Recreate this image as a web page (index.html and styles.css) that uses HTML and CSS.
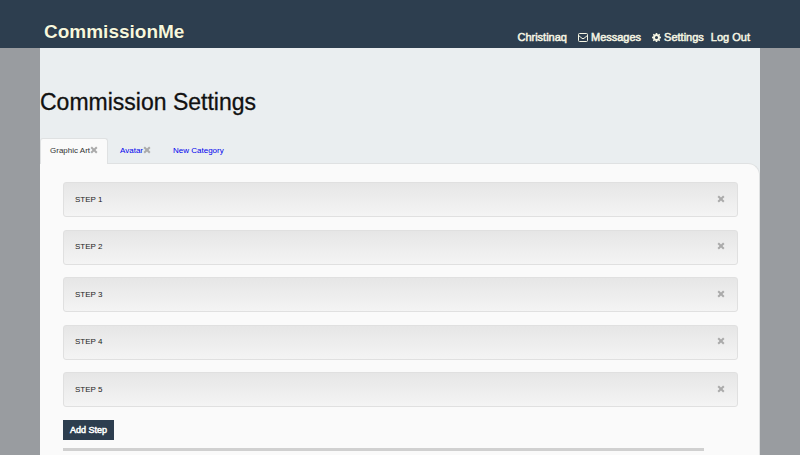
FILE: index.html
```html
<!DOCTYPE html>
<html lang="en">
<head>
<meta charset="utf-8">
<title>CommissionMe</title>
<link rel="stylesheet" href="styles.css">
</head>
<body>
<svg class="sprite" aria-hidden="true">
  <symbol id="close" viewBox="0 0 8 8"><path d="M1.200 1.200 6.800 6.800M6.800 1.200 1.200 6.800" fill="none" stroke="currentColor" stroke-width="2"/></symbol>
</svg>
<header class="topbar">
  <div class="topbar-inner">
    <a class="brand" href="#">CommissionMe</a>
    <nav class="nav">
      <a class="user" href="#">Christinaq</a>
      <a class="messages" href="#"><svg class="mail" viewBox="0 0 10 9" aria-hidden="true"><path d="M1.500.5h7q1 0 1 1v6q0 1-1 1h-7q-1 0-1-1v-6q0-1 1-1ZM.8 2.700 4 5.300q1 .8 2 0l3.200-2.600" fill="none" stroke="currentColor"/></svg>Messages</a>
      <a href="#"><svg class="gear" viewBox="0 0 16 16" aria-hidden="true"><path fill="currentColor" fill-rule="evenodd" d="M6.700 0h2.600l.4 2.100 1.500.6L13 1.500 14.500 3l-1.200 1.800.6 1.500 2.100.4v2.600l-2.100.4-.6 1.500 1.200 1.800-1.500 1.500-1.800-1.200-1.500.6-.4 2.100H6.700l-.4-2.100-1.500-.6L3 14.500 1.500 13l1.200-1.800-.6-1.500L0 9.300V6.700l2.100-.4.6-1.500L1.500 3 3 1.500l1.800 1.200 1.500-.6ZM8 5.300a2.700 2.700 0 1 0 0 5.400 2.700 2.700 0 0 0 0-5.400Z"/></svg>Settings</a>
      <a href="#">Log Out</a>
    </nav>
  </div>
</header>
<main class="page">
  <h1>Commission Settings</h1>
  <div class="tabs">
    <div class="tab active"><a href="#">Graphic Art</a><button class="close" aria-label="Remove Graphic Art"><svg><use href="#close"/></svg></button></div>
    <div class="tab"><a href="#">Avatar</a><button class="close" aria-label="Remove Avatar"><svg><use href="#close"/></svg></button></div>
    <div class="tab"><a href="#">New Category</a></div>
  </div>
  <section class="panel">
    <div class="steps">
      <div class="step"><span>STEP 1</span><button class="close" aria-label="Remove step 1"><svg><use href="#close"/></svg></button></div>
      <div class="step"><span>STEP 2</span><button class="close" aria-label="Remove step 2"><svg><use href="#close"/></svg></button></div>
      <div class="step"><span>STEP 3</span><button class="close" aria-label="Remove step 3"><svg><use href="#close"/></svg></button></div>
      <div class="step"><span>STEP 4</span><button class="close" aria-label="Remove step 4"><svg><use href="#close"/></svg></button></div>
      <div class="step"><span>STEP 5</span><button class="close" aria-label="Remove step 5"><svg><use href="#close"/></svg></button></div>
    </div>
    <button class="add">Add Step</button>
    <hr>
  </section>
</main>
</body>
</html>
```
FILE: styles.css
```css
* { box-sizing: border-box; }
body {
  margin: 0;
  min-height: 100vh;
  display: flex;
  flex-direction: column;
  background: #999ca0;
  font: 8px/12px "Liberation Sans", Arial, sans-serif;
  color: #222;
}
a { color: inherit; text-decoration: none; }
button { border: 0; padding: 0; font-family: inherit; cursor: pointer; }
.sprite { position: absolute; width: 0; height: 0; }

.topbar { background: #2d3e4f; color: #f5f5e3; }
.topbar-inner {
  width: 90%;
  height: 48px;
  margin: 0 auto;
  padding: 0 10px 4px 4px;
  display: flex;
  justify-content: space-between;
  align-items: flex-end;
}
.brand {
  color: #f7f7dc;
  font-size: 19px;
  font-weight: bold;
  line-height: 24px;
  text-shadow: 0 0 1px #101c30;
}
.nav {
  display: flex;
  gap: 7px;
  font-size: 11px;
  line-height: 14px;
  -webkit-text-stroke: 0.5px currentColor;
}
.nav a { display: flex; align-items: center; }
.nav svg { margin-right: 3px; }
.user, .messages { margin-right: 4px; }
.mail { width: 10px; height: 9px; }
.gear { width: 9px; height: 9px; }

.page {
  width: 90%;
  flex: 1;
  margin: 0 auto;
  display: flex;
  flex-direction: column;
  background: #eaeef0;
}
h1 {
  margin: 40px 0 22px;
  color: #111;
  font-size: 23px;
  font-weight: normal;
  line-height: 28px;
  -webkit-text-stroke: 0.3px currentColor;
}
.tabs { display: flex; gap: 2px; }
.tab {
  display: flex;
  align-items: center;
  height: 25px;
  padding: 0 9px;
  border: 1px solid transparent;
  border-bottom: 0;
  color: #00e;
}
.tab.active {
  position: relative;
  z-index: 1;
  height: 26px;
  margin-bottom: -1px;
  padding-bottom: 1px;
  border-color: #dfe1e2;
  border-radius: 3px 3px 0 0;
  background: #fafafa;
  color: #333;
}
.close { display: flex; padding-bottom: 2px; background: none; color: #aaa; }
.close svg { width: 8px; height: 8px; }

.panel {
  flex: 1;
  padding: 18px 21px 0 23px;
  border: 1px solid #dfe1e2;
  border-width: 1px 1px 0 0;
  border-radius: 0 12px 0 0;
  background: #fafafa;
}
.steps {
  min-height: 225px;
  display: flex;
  flex-direction: column;
  justify-content: space-between;
}
.step {
  display: flex;
  justify-content: space-between;
  align-items: center;
  height: 35px;
  padding: 0 12px 0 11px;
  border: 1px solid #e0e0e0;
  border-radius: 3px;
  background: linear-gradient(#e6e6e6, #f4f4f4);
}
.add {
  display: block;
  margin: 13px 0 8px;
  padding: 4px 7px;
  background: #2d3e4f;
  color: #fff;
  font-size: 9px;
  line-height: 12px;
  -webkit-text-stroke: 0.5px currentColor;
}
hr { width: 95%; height: 3px; margin: 0; border: 0; background: #d0d0d0; }
```
